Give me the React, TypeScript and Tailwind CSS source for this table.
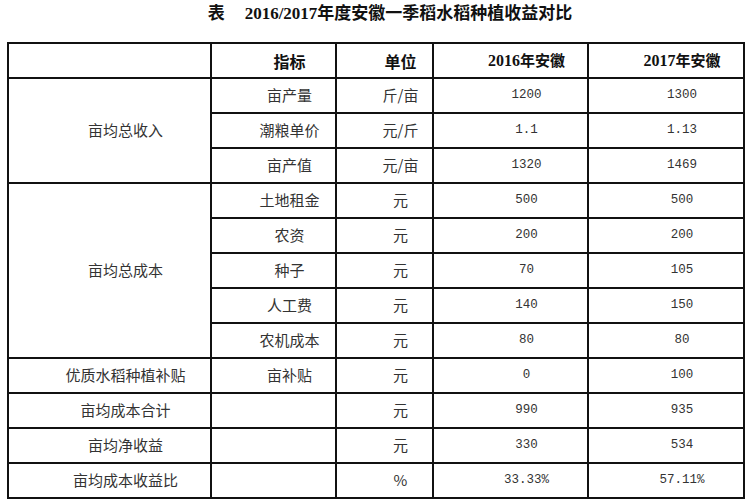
import React from 'react';

type Row = {
  group?: string;
  span?: number;
  item: string;
  unit: string;
  y2016: string;
  y2017: string;
};

const rows: Row[] = [
  { group: '亩均总收入', span: 3, item: '亩产量', unit: '斤/亩', y2016: '1200', y2017: '1300' },
  { item: '潮粮单价', unit: '元/斤', y2016: '1.1', y2017: '1.13' },
  { item: '亩产值', unit: '元/亩', y2016: '1320', y2017: '1469' },
  { group: '亩均总成本', span: 5, item: '土地租金', unit: '元', y2016: '500', y2017: '500' },
  { item: '农资', unit: '元', y2016: '200', y2017: '200' },
  { item: '种子', unit: '元', y2016: '70', y2017: '105' },
  { item: '人工费', unit: '元', y2016: '140', y2017: '150' },
  { item: '农机成本', unit: '元', y2016: '80', y2017: '80' },
  { group: '优质水稻种植补贴', span: 1, item: '亩补贴', unit: '元', y2016: '0', y2017: '100' },
  { group: '亩均成本合计', span: 1, item: '', unit: '元', y2016: '990', y2017: '935' },
  { group: '亩均净收益', span: 1, item: '', unit: '元', y2016: '330', y2017: '534' },
  { group: '亩均成本收益比', span: 1, item: '', unit: '%', y2016: '33.33%', y2017: '57.11%' },
];

const cjk = "font-['Noto_Sans_CJK_SC',sans-serif]";
const num = "font-['Liberation_Mono','Noto_Sans_CJK_SC',monospace]";
const cell = 'border-2 border-[#111] pl-[32px] text-center align-middle';

export default function App() {
  return (
    <div className="w-[750px] h-[500px] bg-white overflow-hidden text-[#333]">
      <div
        className={`h-[42px] pl-[30px] pt-[3px] text-center text-[17px] leading-[18px] font-bold text-[#111] ${cjk}`}
      >
        <span>表</span>
        <span className="ml-[20px] font-['Liberation_Serif',serif]">2016/2017</span>
        <span>年度安徽一季稻水稻种植收益对比</span>
      </div>
      <table className="ml-[7px] w-[736px] table-fixed border-collapse">
        <colgroup>
          <col className="w-[203px]" />
          <col className="w-[125px]" />
          <col className="w-[97px]" />
          <col className="w-[155px]" />
          <col className="w-[156px]" />
        </colgroup>
        <tbody>
          <tr className="h-[35px]">
            <td className={cell}></td>
            <td className={`${cell} text-[16px] font-bold text-[#111] ${cjk}`}>指标</td>
            <td className={`${cell} text-[16px] font-bold text-[#111] ${cjk}`}>单位</td>
            <td className={`${cell} text-[15px] font-bold text-[#111] ${cjk}`}>
              <span className="font-['Liberation_Serif',serif] text-[16px]">2016</span>年安徽
            </td>
            <td className={`${cell} text-[15px] font-bold text-[#111] ${cjk}`}>
              <span className="font-['Liberation_Serif',serif] text-[16px]">2017</span>年安徽
            </td>
          </tr>
          {rows.map((r, i) => (
            <tr key={i} className="h-[35px]">
              {r.group && (
                <td rowSpan={r.span} className={`${cell} text-[15px] ${cjk}`}>
                  {r.group}
                </td>
              )}
              <td className={`${cell} text-[15px] ${cjk}`}>{r.item}</td>
              <td className={`${cell} text-[15px] ${cjk}`}>{r.unit}</td>
              <td className={`${cell} text-[12.5px] ${num}`}>{r.y2016}</td>
              <td className={`${cell} text-[12.5px] ${num}`}>{r.y2017}</td>
            </tr>
          ))}
        </tbody>
      </table>
    </div>
  );
}
